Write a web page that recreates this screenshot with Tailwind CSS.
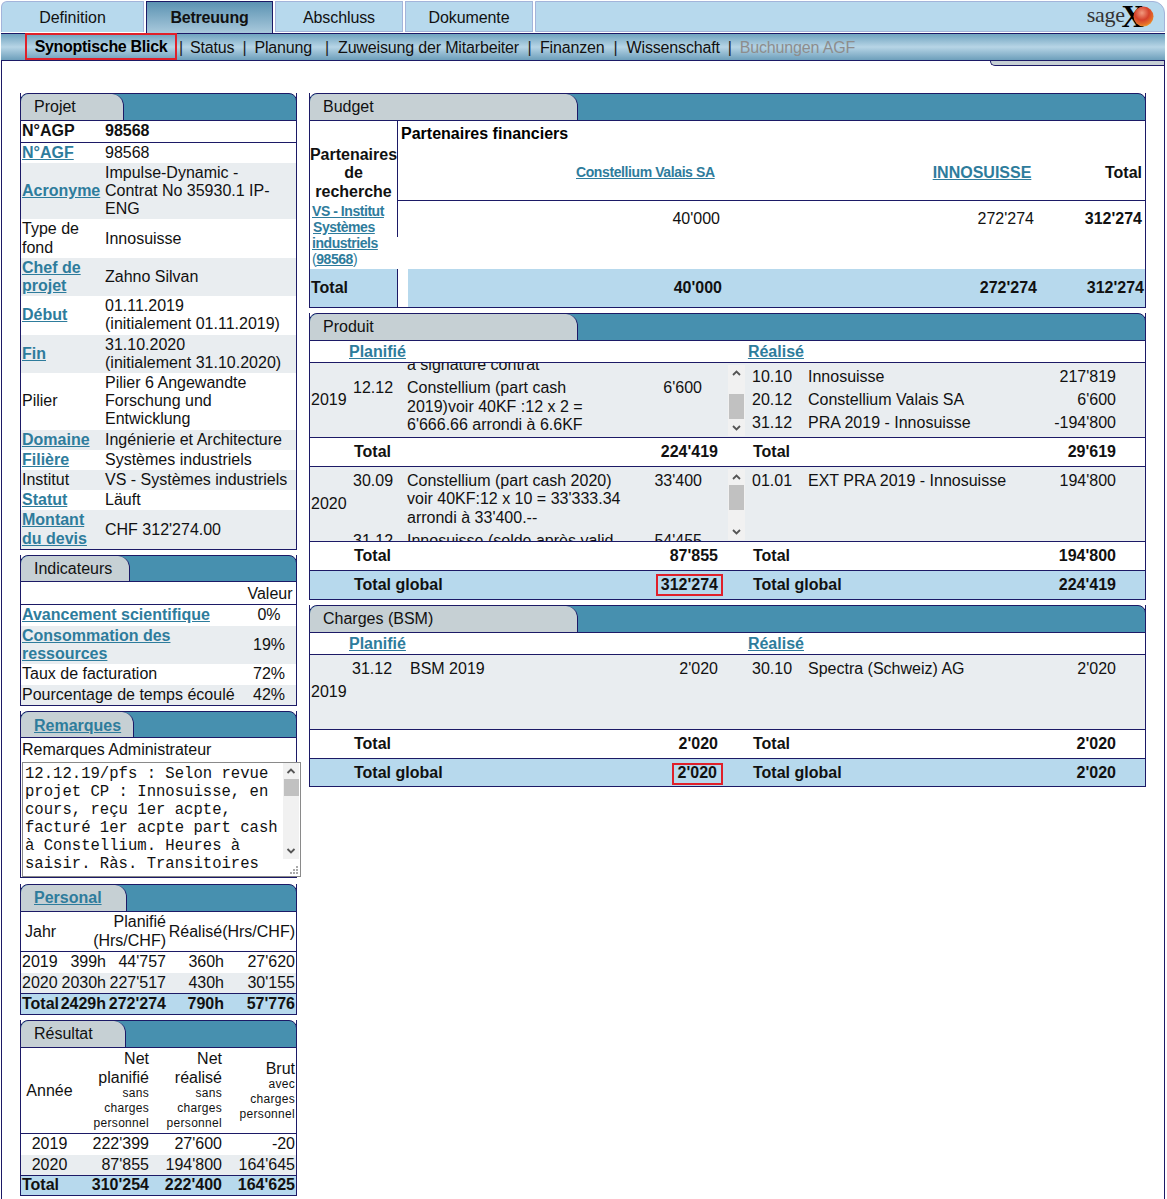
<!DOCTYPE html>
<html lang="de"><head><meta charset="utf-8"><title>Betreuung</title>
<script src="https://cdn.jsdelivr.net/npm/@tailwindcss/browser@4"></script></head>
<body class="bg-white font-['Liberation_Sans',Arial,sans-serif] text-[16px] leading-[18.4px] text-[#111]">
<div class="h-[1199px] w-[1167px] overflow-hidden">
  <!-- top tabs -->
  <div class="flex h-[33px] w-[1165px] pl-[1px] pt-[1px] gap-[2px]">
    <div class="w-[143px] h-[31px] bg-[#b7d9ed] border border-[#a3b4da] border-b-0 rounded-tl-[6px] flex items-center justify-center pt-[2px]">Definition</div>
    <div class="w-[127px] h-[32px] bg-gradient-to-b from-[#5b93b2] to-[#a9c9dc] border border-[#1c1a66] border-b-0 flex items-center justify-center font-bold tracking-[-0.2px] pt-[2px]">Betreuung</div>
    <div class="w-[128px] h-[31px] bg-[#b7d9ed] border border-[#a3b4da] flex items-center justify-center pt-[3px] tracking-[-0.1px]">Abschluss</div>
    <div class="w-[128px] h-[31px] bg-[#b7d9ed] border border-[#a3b4da] flex items-center justify-center pt-[3px] tracking-[-0.1px]">Dokumente</div>
    <div class="flex-1 h-[31px] bg-[#b7d9ed] border border-[#a3b4da] rounded-tr-[12px] flex justify-end items-center pr-[10px]">
      <div class="flex items-center h-[26px] font-['Liberation_Serif',serif] relative">
        <span class="text-[22px] text-[#333] tracking-[-0.3px] pb-[2px]">sage</span><span class="font-bold text-[31px] text-black -ml-[3px] leading-[26px]">X</span>
        <svg class="w-[21px] h-[21px] -ml-[11px] relative" viewBox="0 0 21 21"><defs><radialGradient id="b" cx="42%" cy="32%" r="72%"><stop offset="0" stop-color="#f29a7e"/><stop offset=".5" stop-color="#d5402a"/><stop offset=".85" stop-color="#e8762a"/><stop offset="1" stop-color="#f0b030"/></radialGradient></defs><circle cx="10.500" cy="10.500" r="10" fill="url(#b)"/></svg>
      </div>
    </div>
  </div>
  <!-- sub nav -->
  <div class="h-[28px] ml-[1px] w-[1164px] bg-gradient-to-b from-[#6fa3bf] via-[#b7d5e6] to-[#6d9fbb] border-t border-b border-[#1c1a66] flex items-center text-[16px] tracking-[-0.16px] pt-[2px]">
    <div class="ml-[24px] h-[27px] w-[152px] self-start -mt-[3px] border-2 border-[#e0202a] flex items-center justify-center font-bold text-black tracking-[-0.3px] pt-px">Synoptische Blick</div>
    <span class="ml-[2px] mr-[7px] text-[#222]">|</span><span>Status</span>
    <span class="mx-[8px] text-[#222]">|</span><span>Planung</span>
    <span class="ml-[13px] mr-[9px] text-[#222]">|</span><span>Zuweisung der Mitarbeiter</span>
    <span class="mx-[8.500px] text-[#222]">|</span><span>Finanzen</span>
    <span class="mx-[9px] text-[#222]">|</span><span>Wissenschaft</span>
    <span class="mx-[8px] text-[#222]">|</span><span class="text-[#8d8d8d]">Buchungen AGF</span>
  </div>
  <!-- page area -->
  <div class="relative ml-[1px] w-[1164px] h-[1138px] border-l border-r border-[#1c1a66]">
    <div class="absolute right-0 top-0 h-[5px] w-[174px] bg-[#c6d0d4] border-b border-l border-[#1c1a66] rounded-bl-[8px]"></div>
    <div class="flex gap-[12px] pl-[18px] pt-[32px]">
      <!-- left column -->
      <div class="w-[277px] flex flex-col gap-[5px]">
        <!-- Projet -->
        <section class="border-x border-b border-[#1c1a66]">
          <div class="h-[28px] bg-[#4790af] rounded-t-[8px] border-t border-b border-[#1c1a66] -mx-[1px] border-x"><div class="h-full w-[103px] bg-[#c6d0d4] rounded-tl-[8px] rounded-tr-[12px] border-r border-[#1c1a66] pl-[13px] flex items-center">Projet</div></div>
          <table class="w-full table-fixed border-collapse leading-[18.200px]">
            <colgroup><col class="w-[84px]"><col></colgroup>
            <tr class="border-b border-[#1c1a66] font-bold"><td class="pt-[1.400px] pb-px pl-px">N°AGP</td><td class="pt-[1.400px] pb-px">98568</td></tr>
            <tr><td class="py-px pl-px"><a class="font-bold text-[#2e7c9c] underline">N°AGF</a></td><td class="py-px">98568</td></tr>
            <tr class="bg-[#e9edf0]"><td class="py-px pl-px"><a class="font-bold text-[#2e7c9c] underline">Acronyme</a></td><td class="py-px pr-[8px]">Impulse-Dynamic - Contrat No 35930.1 IP-ENG</td></tr>
            <tr><td class="py-px pl-px">Type de fond</td><td class="py-px">Innosuisse</td></tr>
            <tr class="bg-[#e9edf0]"><td class="py-px pl-px"><a class="font-bold text-[#2e7c9c] underline">Chef de projet</a></td><td class="py-px">Zahno Silvan</td></tr>
            <tr><td class="py-px pl-px"><a class="font-bold text-[#2e7c9c] underline">Début</a></td><td class="py-px">01.11.2019<br>(initialement 01.11.2019)</td></tr>
            <tr class="bg-[#e9edf0]"><td class="py-px pl-px"><a class="font-bold text-[#2e7c9c] underline">Fin</a></td><td class="py-px">31.10.2020<br>(initialement 31.10.2020)</td></tr>
            <tr><td class="py-px pl-px">Pilier</td><td class="py-px">Pilier 6 Angewandte Forschung und Entwicklung</td></tr>
            <tr class="bg-[#e9edf0]"><td class="py-px pl-px"><a class="font-bold text-[#2e7c9c] underline">Domaine</a></td><td class="py-px">Ingénierie et Architecture</td></tr>
            <tr><td class="py-px pl-px"><a class="font-bold text-[#2e7c9c] underline">Filière</a></td><td class="py-px">Systèmes industriels</td></tr>
            <tr class="bg-[#e9edf0]"><td class="py-px pl-px">Institut</td><td class="py-px">VS - Systèmes industriels</td></tr>
            <tr><td class="py-px pl-px"><a class="font-bold text-[#2e7c9c] underline">Statut</a></td><td class="py-px">Läuft</td></tr>
            <tr class="bg-[#e9edf0]"><td class="py-px pl-px"><a class="font-bold text-[#2e7c9c] underline">Montant du devis</a></td><td class="py-px">CHF 312'274.00</td></tr>
          </table>
        </section>
        <!-- Indicateurs -->
        <section class="border-x border-b border-[#1c1a66]">
          <div class="h-[27px] bg-[#4790af] rounded-t-[8px] border-t border-b border-[#1c1a66] -mx-[1px] border-x"><div class="h-full w-[109px] bg-[#c6d0d4] rounded-tl-[8px] rounded-tr-[12px] border-r border-[#1c1a66] pl-[13px] pt-[2px] flex items-center">Indicateurs</div></div>
          <table class="w-full table-fixed border-collapse">
            <colgroup><col><col class="w-[50px]"></colgroup>
            <tr class="border-b border-[#1c1a66]"><td class="pt-[3px] pb-px"></td><td class="pt-[3px] pb-px text-center pr-[2px]">Valeur</td></tr>
            <tr><td class="py-px pl-px"><a class="font-bold text-[#2e7c9c] underline">Avancement scientifique</a></td><td class="text-center pr-[4px]">0%</td></tr>
            <tr class="bg-[#e9edf0]"><td class="py-px pl-px"><a class="font-bold text-[#2e7c9c] underline">Consommation des ressources</a></td><td class="text-center pr-[4px]">19%</td></tr>
            <tr><td class="py-px pl-px">Taux de facturation</td><td class="text-center pr-[4px]">72%</td></tr>
            <tr class="bg-[#e9edf0]"><td class="py-px pl-px">Pourcentage de temps écoulé</td><td class="text-center pr-[4px]">42%</td></tr>
          </table>
        </section>
        <!-- Remarques -->
        <section class="border-x border-b border-[#1c1a66]">
          <div class="h-[27px] bg-[#4790af] rounded-t-[8px] border-t border-b border-[#1c1a66] -mx-[1px] border-x"><div class="h-full w-[113px] bg-[#c6d0d4] rounded-tl-[8px] rounded-tr-[12px] border-r border-[#1c1a66] pl-[13px] pt-[2px] flex items-center"><a class="font-bold text-[#2e7c9c] underline">Remarques</a></div></div>
          <div class="pl-px pt-[3px] h-[21px]">Remarques Administrateur</div>
          <div class="relative h-[118px]">
            <div class="absolute left-[1px] top-[3px] w-[279px] h-[115px] border border-[#8a8a8a] bg-white flex overflow-hidden">
              <div class="flex-1 pl-[2px] pt-[2px] font-['Liberation_Mono',monospace] text-[15.600px] leading-[18px] whitespace-pre">12.12.19/pfs : Selon revue
projet CP : Innosuisse, en
cours, reçu 1er acpte,
facturé 1er acpte part cash
à Constellium. Heures à
saisir. Ràs. Transitoires</div>
              <div class="w-[16px] mr-px h-[96px] bg-[#f1f1f1] flex flex-col items-center justify-between">
                <svg class="w-[16px] h-[17px]" viewBox="0 0 16 17"><path d="M4.5 10 8 6.5 11.500 10" fill="none" stroke="#555" stroke-width="1.800"/></svg>
                <div class="w-[15px] h-[17px] bg-[#c1c1c1] -mt-[1px] mb-auto"></div>
                <svg class="w-[16px] h-[17px]" viewBox="0 0 16 17"><path d="M4.500 7 8 10.500 11.500 7" fill="none" stroke="#555" stroke-width="1.800"/></svg>
              </div>
              <svg class="absolute right-[1px] bottom-[1px] w-[10px] h-[10px]" viewBox="0 0 10 10"><g fill="#aaa"><rect x="7" y="1" width="2" height="2"/><rect x="4" y="4" width="2" height="2"/><rect x="7" y="4" width="2" height="2"/><rect x="1" y="7" width="2" height="2"/><rect x="4" y="7" width="2" height="2"/><rect x="7" y="7" width="2" height="2"/></g></svg>
            </div>
          </div>
        </section>
        <!-- Personal -->
        <section class="border-x border-b border-[#1c1a66] mt-px">
          <div class="h-[28px] bg-[#4790af] rounded-t-[8px] border-t border-b border-[#1c1a66] -mx-[1px] border-x"><div class="h-full w-[106px] bg-[#c6d0d4] rounded-tl-[8px] rounded-tr-[12px] border-r border-[#1c1a66] pl-[13px] flex items-center"><a class="font-bold text-[#2e7c9c] underline">Personal</a></div></div>
          <table class="w-full table-fixed border-collapse">
            <colgroup><col class="w-[39px]"><col class="w-[46px]"><col class="w-[60px]"><col class="w-[58px]"><col></colgroup>
            <tr class="border-b border-[#1c1a66]"><td class="pl-[4px] py-px">Jahr</td><td colspan="2" class="text-right py-px">Planifié<br>(Hrs/CHF)</td><td colspan="2" class="text-right pr-px whitespace-nowrap py-px align-middle">Réalisé(Hrs/CHF)</td></tr>
            <tr><td class="pl-px py-px">2019</td><td class="text-right py-px">399h</td><td class="text-right py-px">44'757</td><td class="text-right py-px">360h</td><td class="text-right pr-px py-px">27'620</td></tr>
            <tr class="bg-[#e9edf0]"><td class="pl-px py-px">2020</td><td class="text-right py-px">2030h</td><td class="text-right py-px">227'517</td><td class="text-right py-px">430h</td><td class="text-right pr-px py-px">30'155</td></tr>
            <tr class="bg-[#b7d9ed] font-bold border-t border-[#1c1a66]"><td class="pl-px py-px">Total</td><td class="text-right py-px">2429h</td><td class="text-right py-px">272'274</td><td class="text-right py-px">790h</td><td class="text-right pr-px py-px">57'776</td></tr>
          </table>
        </section>
        <!-- Résultat -->
        <section class="border-x border-b border-[#1c1a66]">
          <div class="h-[28px] bg-[#4790af] rounded-t-[8px] border-t border-b border-[#1c1a66] -mx-[1px] border-x"><div class="h-full w-[105px] bg-[#c6d0d4] rounded-tl-[8px] rounded-tr-[12px] border-r border-[#1c1a66] pl-[13px] flex items-center">Résultat</div></div>
          <table class="w-full table-fixed border-collapse">
            <colgroup><col class="w-[57px]"><col class="w-[72px]"><col class="w-[73px]"><col></colgroup>
            <tr class="border-b border-[#1c1a66]"><td class="text-center">Année</td>
              <td class="text-right pr-px pt-[2px] pb-[2px]">Net planifié<div class="text-[12px] leading-[15px] tracking-[0.3px] -mt-px">sans charges personnel</div></td>
              <td class="text-right pr-px pt-[2px] pb-[2px]">Net réalisé<div class="text-[12px] leading-[15px] tracking-[0.3px] -mt-px">sans charges personnel</div></td>
              <td class="text-right pr-px pt-[2px] pb-[2px]">Brut<div class="text-[12px] leading-[15px] tracking-[0.3px] -mt-px">avec charges personnel</div></td></tr>
            <tr><td class="text-center py-px">2019</td><td class="text-right pr-px py-px">222'399</td><td class="text-right pr-px py-px">27'600</td><td class="text-right pr-px py-px">-20</td></tr>
            <tr class="bg-[#e9edf0]"><td class="text-center py-px">2020</td><td class="text-right pr-px py-px">87'855</td><td class="text-right pr-px py-px">194'800</td><td class="text-right pr-px py-px">164'645</td></tr>
            <tr class="bg-[#b7d9ed] font-bold border-t border-[#1c1a66]"><td class="pl-px pb-px">Total</td><td class="text-right pr-px pb-px">310'254</td><td class="text-right pr-px pb-px">222'400</td><td class="text-right pr-px pb-px">164'625</td></tr>
          </table>
        </section>
      </div>
      <!-- right column -->
      <div class="w-[837px] flex flex-col gap-[5px]">
        <!-- Budget -->
        <section class="border-x border-b border-[#1c1a66]">
          <div class="h-[28px] bg-[#4790af] rounded-t-[8px] border-t border-b border-[#1c1a66] -mx-[1px] border-x"><div class="h-full w-[268px] bg-[#c6d0d4] rounded-tl-[8px] rounded-tr-[12px] border-r border-[#1c1a66] pl-[13px] flex items-center">Budget</div></div>
          <div class="flex h-[80px]">
            <div class="w-[88px] border-r border-[#1c1a66] flex flex-col justify-end items-center text-center font-bold">Partenaires<br>de<br>recherche</div>
            <div class="flex-1 border-b border-[#1c1a66] relative">
              <div class="font-bold pl-[3px] pt-[4px] text-black">Partenaires financiers</div>
              <div class="flex items-center mt-[21px]">
                <a class="ml-[178px] font-bold text-[14px] text-[#2e7c9c] underline tracking-[-0.4px] -mt-[2px]">Constellium Valais SA</a>
                <a class="ml-[218px] font-bold text-[#2e7c9c] underline">INNOSUISSE</a>
                <span class="ml-auto mr-[3px] font-bold">Total</span>
              </div>
            </div>
          </div>
          <div class="flex h-[68px]">
            <div class="w-[88px] text-[14px] leading-[16px] font-bold text-[#2e7c9c] tracking-[-0.45px] pl-[2px] pt-[2px] relative"><a class="underline">VS - Institut<br><span class="pl-px">Systèmes</span><br>industriels<br></a><span class="font-normal">(</span><a class="underline">98568</a><span class="font-normal">)</span><div class="absolute right-0 top-0 h-[36px] w-px bg-[#1c1a66]"></div></div>
            <div class="flex-1 pt-[9px] grid grid-cols-[322px_314px_1fr] text-right">
              <span>40'000</span><span>272'274</span><span class="font-bold pr-[3px]">312'274</span>
            </div>
          </div>
          <div class="flex h-[38px] font-bold items-stretch">
            <div class="w-[88px] bg-[#b7d9ed] border-r border-[#1c1a66] flex items-center pl-px pt-px">Total</div>
            <div class="w-[10px]"></div>
            <div class="flex-1 bg-[#b7d9ed] grid grid-cols-[314px_315px_1fr] text-right items-center pt-px">
              <span>40'000</span><span>272'274</span><span class="pr-px">312'274</span>
            </div>
          </div>
        </section>
        <!-- Produit -->
        <section class="border-x border-b border-[#1c1a66]">
          <div class="h-[28px] bg-[#4790af] rounded-t-[8px] border-t border-b border-[#1c1a66] -mx-[1px] border-x"><div class="h-full w-[268px] bg-[#c6d0d4] rounded-tl-[8px] rounded-tr-[12px] border-r border-[#1c1a66] pl-[13px] flex items-center">Produit</div></div>
          <div class="flex h-[22px] border-b border-[#1c1a66] items-center font-bold pt-[2px]"><a class="ml-[39px] text-[#2e7c9c] underline">Planifié</a><a class="ml-[342px] text-[#2e7c9c] underline">Réalisé</a></div>
          <!-- 2019 -->
          <div class="flex h-[75px] bg-[#e9edf0] border-b border-[#1c1a66]">
            <div class="w-[42px] pl-px flex items-center">2019</div>
            <div class="w-[376px] h-full overflow-hidden">
              <div class="-mt-[7px] w-[376px]">
                <div class="grid grid-cols-[55px_248px_50px] pb-[5px]"><span></span><span>a signature contrat</span><span></span></div>
                <div class="grid grid-cols-[55px_252px_43px]"><span class="pl-px">12.12</span><span class="pr-[52px]">Constellium (part cash 2019)voir 40KF :12 x 2 = 6'666.66 arrondi à 6.6KF</span><span class="text-right">6'600</span></div>
              </div>
            </div>
            <div class="w-[17px] h-[71px] mt-[2px] bg-[#f1f1f1] flex flex-col">
              <svg class="w-[17px] h-[17px]" viewBox="0 0 17 17"><path d="M5 10 8.500 6.500 12 10" fill="none" stroke="#555" stroke-width="1.800"/></svg>
              <div class="w-[15px] mx-px h-[25px] bg-[#c1c1c1] mt-[12px]"></div>
              <svg class="w-[17px] h-[15px] mt-auto" viewBox="0 0 17 15"><path d="M5 5 8.500 8.500 12 5" fill="none" stroke="#555" stroke-width="1.800"/></svg>
            </div>
            <div class="flex-1 grid grid-cols-[56px_1fr_auto] auto-rows-[23px] pl-[7px] pr-[29px] pt-[5px]">
              <span>10.10</span><span>Innosuisse</span><span class="text-right">217'819</span>
              <span>20.12</span><span>Constellium Valais SA</span><span class="text-right">6'600</span>
              <span>31.12</span><span>PRA 2019 - Innosuisse</span><span class="text-right">-194'800</span>
            </div>
          </div>
          <div class="flex h-[29px] border-b border-[#1c1a66] items-center font-bold"><span class="ml-[44px] w-[364px] flex justify-between">Total<span>224'419</span></span><span class="ml-[35px] flex-1 flex justify-between pr-[29px]">Total<span>29'619</span></span></div>
          <!-- 2020 -->
          <div class="flex h-[75px] bg-[#e9edf0] border-b border-[#1c1a66]">
            <div class="w-[42px] pl-px flex items-center">2020</div>
            <div class="w-[376px] h-full overflow-hidden pt-[5px]">
              <div class="grid grid-cols-[55px_245px_50px] w-[376px]">
                <span class="pl-px">30.09</span><span class="pr-[18px]">Constellium (part cash 2020) voir 40KF:12 x 10 = 33'333.34 arrondi à 33'400.--</span><span class="text-right">33'400</span>
                <span class="mt-[5px] col-start-1 pl-px">31.12</span><span class="mt-[5px]">Innosuisse (solde après valid</span><span class="mt-[5px] text-right">54'455</span>
              </div>
            </div>
            <div class="w-[17px] h-[71px] mt-[2px] bg-[#f1f1f1] flex flex-col">
              <svg class="w-[17px] h-[17px]" viewBox="0 0 17 17"><path d="M5 10 8.500 6.500 12 10" fill="none" stroke="#555" stroke-width="1.800"/></svg>
              <div class="w-[15px] mx-px h-[25px] bg-[#c1c1c1] -mt-px"></div>
              <svg class="w-[17px] h-[15px] mt-auto" viewBox="0 0 17 15"><path d="M5 5 8.500 8.500 12 5" fill="none" stroke="#555" stroke-width="1.800"/></svg>
            </div>
            <div class="flex-1 grid grid-cols-[56px_1fr_auto] auto-rows-[23px] pl-[7px] pr-[29px] pt-[5px]">
              <span>01.01</span><span>EXT PRA 2019 - Innosuisse</span><span class="text-right">194'800</span>
            </div>
          </div>
          <div class="flex h-[29px] border-b border-[#1c1a66] items-center font-bold"><span class="ml-[44px] w-[364px] flex justify-between">Total<span>87'855</span></span><span class="ml-[35px] flex-1 flex justify-between pr-[29px]">Total<span>194'800</span></span></div>
          <div class="flex h-[28px] bg-[#b7d9ed] items-center font-bold"><span class="ml-[44px] w-[364px] flex justify-between items-center">Total global<span class="border-2 border-[#e0202a] h-[22px] px-[3px] -mr-[5px] flex items-center">312'274</span></span><span class="ml-[35px] flex-1 flex justify-between pr-[29px]">Total global<span>224'419</span></span></div>
        </section>
        <!-- Charges -->
        <section class="border-x border-b border-[#1c1a66]">
          <div class="h-[28px] bg-[#4790af] rounded-t-[8px] border-t border-b border-[#1c1a66] -mx-[1px] border-x"><div class="h-full w-[268px] bg-[#c6d0d4] rounded-tl-[8px] rounded-tr-[12px] border-r border-[#1c1a66] pl-[13px] flex items-center">Charges (BSM)</div></div>
          <div class="flex h-[22px] border-b border-[#1c1a66] items-center font-bold pt-[2px]"><a class="ml-[39px] text-[#2e7c9c] underline">Planifié</a><a class="ml-[342px] text-[#2e7c9c] underline">Réalisé</a></div>
          <div class="flex h-[75px] bg-[#e9edf0] border-b border-[#1c1a66]">
            <div class="w-[42px] pl-px flex items-center">2019</div>
            <div class="flex-1 pt-[5px] flex">
              <div class="w-[58px]">31.12</div><div class="w-[266px]">BSM 2019</div><div class="w-[42px] text-right">2'020</div>
              <div class="ml-[34px] w-[56px]">30.10</div><div class="flex-1">Spectra (Schweiz) AG</div><div class="pr-[29px]">2'020</div>
            </div>
          </div>
          <div class="flex h-[29px] border-b border-[#1c1a66] items-center font-bold pt-px"><span class="ml-[44px] w-[364px] flex justify-between">Total<span>2'020</span></span><span class="ml-[35px] flex-1 flex justify-between pr-[29px]">Total<span>2'020</span></span></div>
          <div class="flex h-[27px] bg-[#b7d9ed] items-center font-bold pt-[2px]"><span class="ml-[44px] w-[364px] flex justify-between items-center">Total global<span class="border-2 border-[#e0202a] h-[22px] px-[4px] -mr-[5px] flex items-center">2'020</span></span><span class="ml-[35px] flex-1 flex justify-between pr-[29px]">Total global<span>2'020</span></span></div>
        </section>
      </div>
    </div>
  </div>
</div>
</body></html>
